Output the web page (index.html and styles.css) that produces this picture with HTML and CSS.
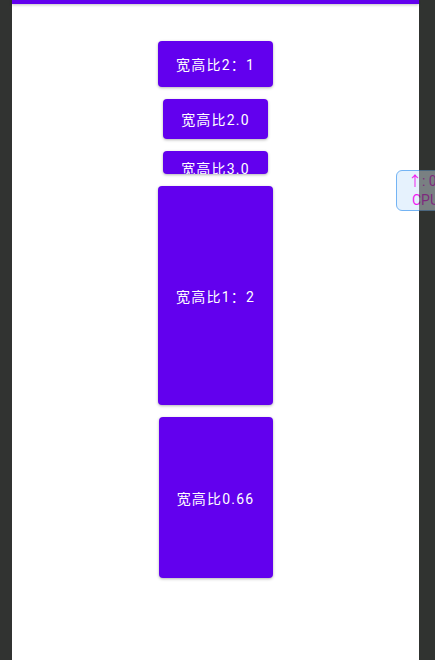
FILE: index.html
```html
<!DOCTYPE html>
<html>
<head>
<meta charset="utf-8">
<link rel="stylesheet" href="styles.css">
</head>
<body>
<div class="frame">
  <div class="side side-left"></div>
  <div class="screen">
    <div class="appbar"></div>
    <div class="list">
      <div class="btn b1"><span>宽高比2：1</span></div>
      <div class="btn b2"><span>宽高比2.0</span></div>
      <div class="btn b3"><span>宽高比3.0</span></div>
      <div class="btn b4"><span>宽高比1：2</span></div>
      <div class="btn b5"><span>宽高比0.66</span></div>
    </div>
  </div>
  <div class="side side-right"></div>
  <div class="monitor">
    <div class="mline">↑: 0.0</div>
    <div class="mline">CPU</div>
  </div>
</div>
</body>
</html>
```
FILE: styles.css
```css
html, body {
  margin: 0;
  padding: 0;
  background: #313331;
  font-family: Roboto, "Noto Sans CJK SC", sans-serif;
}
.frame {
  position: relative;
  display: flex;
  width: 435px;
  height: 660px;
  overflow: hidden;
}
.side-left {
  width: 12px;
  flex: none;
  background: #313331;
}
.side-right {
  width: 16px;
  flex: none;
  position: relative;
  z-index: 2;
  background: rgba(49, 51, 49, 0.6);
}
.screen {
  width: 407px;
  flex: none;
  background: #ffffff;
  display: flex;
  flex-direction: column;
}
.appbar {
  height: 4px;
  background: #6200ee;
  box-shadow: 0 1px 3px rgba(0, 0, 0, 0.25);
}
.list {
  display: flex;
  flex-direction: column;
  align-items: center;
  gap: 12px;
  padding-top: 37px;
}
.btn {
  background: #6200ee;
  color: #ffffff;
  border-radius: 4px;
  box-shadow: 0 1px 3px rgba(0, 0, 0, 0.3);
  display: flex;
  align-items: center;
  justify-content: center;
  font-size: 14px;
  letter-spacing: 1.2px;
  overflow: hidden;
  box-sizing: border-box;
}
.btn span { white-space: nowrap; }
.b1 { width: 115px; height: 46px; }
.b2 { width: 105px; height: 40px; }
.b3 { width: 105px; height: 23px; align-items: flex-start; padding-top: 7px; }
.b4 { width: 115px; height: 219px; }
.b5 { width: 114px; height: 161px; }
.monitor {
  position: absolute;
  left: 396px;
  top: 170px;
  width: 60px;
  height: 41px;
  box-sizing: border-box;
  background: #e6f2fd;
  border: 1px solid #74b4f4;
  border-radius: 6px;
  padding: 1px 0 0 11px;
  z-index: 1;
  color: #f018f0;
  font-size: 14px;
  line-height: 19px;
}
.mline:last-child { padding-left: 4px; }
```
